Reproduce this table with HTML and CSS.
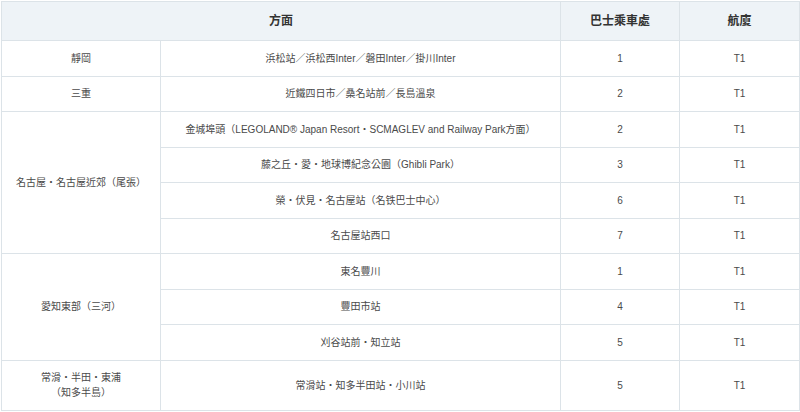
FILE: index.html
```html
<!DOCTYPE html>
<html lang="zh-Hant">
<head>
<meta charset="utf-8">
<link rel="stylesheet" href="styles.css">
</head>
<body>
<table class="bus">
  <colgroup>
    <col class="c-area"><col class="c-dest"><col class="c-stop"><col class="c-term">
  </colgroup>
  <thead>
    <tr><th colspan="2">方面</th><th>巴士乘車處</th><th>航廈</th></tr>
  </thead>
  <tbody>
    <tr><td>靜岡</td><td>浜松站／浜松西Inter／磐田Inter／掛川Inter</td><td>1</td><td>T1</td></tr>
    <tr><td>三重</td><td>近鐵四日市／桑名站前／長島溫泉</td><td>2</td><td>T1</td></tr>
    <tr><td rowspan="4">名古屋・名古屋近郊（尾張）</td><td>金城埠頭（LEGOLAND® Japan Resort・SCMAGLEV and Railway Park方面）</td><td>2</td><td>T1</td></tr>
    <tr><td>藤之丘・愛・地球博紀念公園（Ghibli Park）</td><td>3</td><td>T1</td></tr>
    <tr><td>榮・伏見・名古屋站（名铁巴士中心）</td><td>6</td><td>T1</td></tr>
    <tr><td>名古屋站西口</td><td>7</td><td>T1</td></tr>
    <tr><td rowspan="3">愛知東部（三河）</td><td>東名豐川</td><td>1</td><td>T1</td></tr>
    <tr><td>豐田市站</td><td>4</td><td>T1</td></tr>
    <tr><td>刈谷站前・知立站</td><td>5</td><td>T1</td></tr>
    <tr class="tall"><td>常滑・半田・東浦<br>（知多半島）</td><td>常滑站・知多半田站・小川站</td><td>5</td><td>T1</td></tr>
  </tbody>
</table>
</body>
</html>
```
FILE: styles.css
```css
html, body {
  margin: 0;
  padding: 0;
  background: #ffffff;
}
body {
  padding: 1px;
  font-family: "Liberation Sans", "Noto Sans CJK TC", sans-serif;
}
.bus {
  width: 798px;
  border-collapse: collapse;
  table-layout: fixed;
  font-size: 10px;
  color: #4a4a4a;
}
.c-area { width: 159px; }
.c-dest { width: 400px; }
.c-stop { width: 119px; }
.c-term { width: 120px; }
.bus th, .bus td {
  border: 1px solid #dce3e8;
  text-align: center;
  vertical-align: middle;
  padding: 0 6px;
  line-height: 15px;
}
.bus th {
  background: #eef3f7;
  font-size: 12px;
  font-weight: bold;
  color: #333;
  height: 39px;
  box-sizing: border-box;
}
.bus tbody tr { height: 35.5px; }
.bus tbody tr.tall { height: 50px; }
```
